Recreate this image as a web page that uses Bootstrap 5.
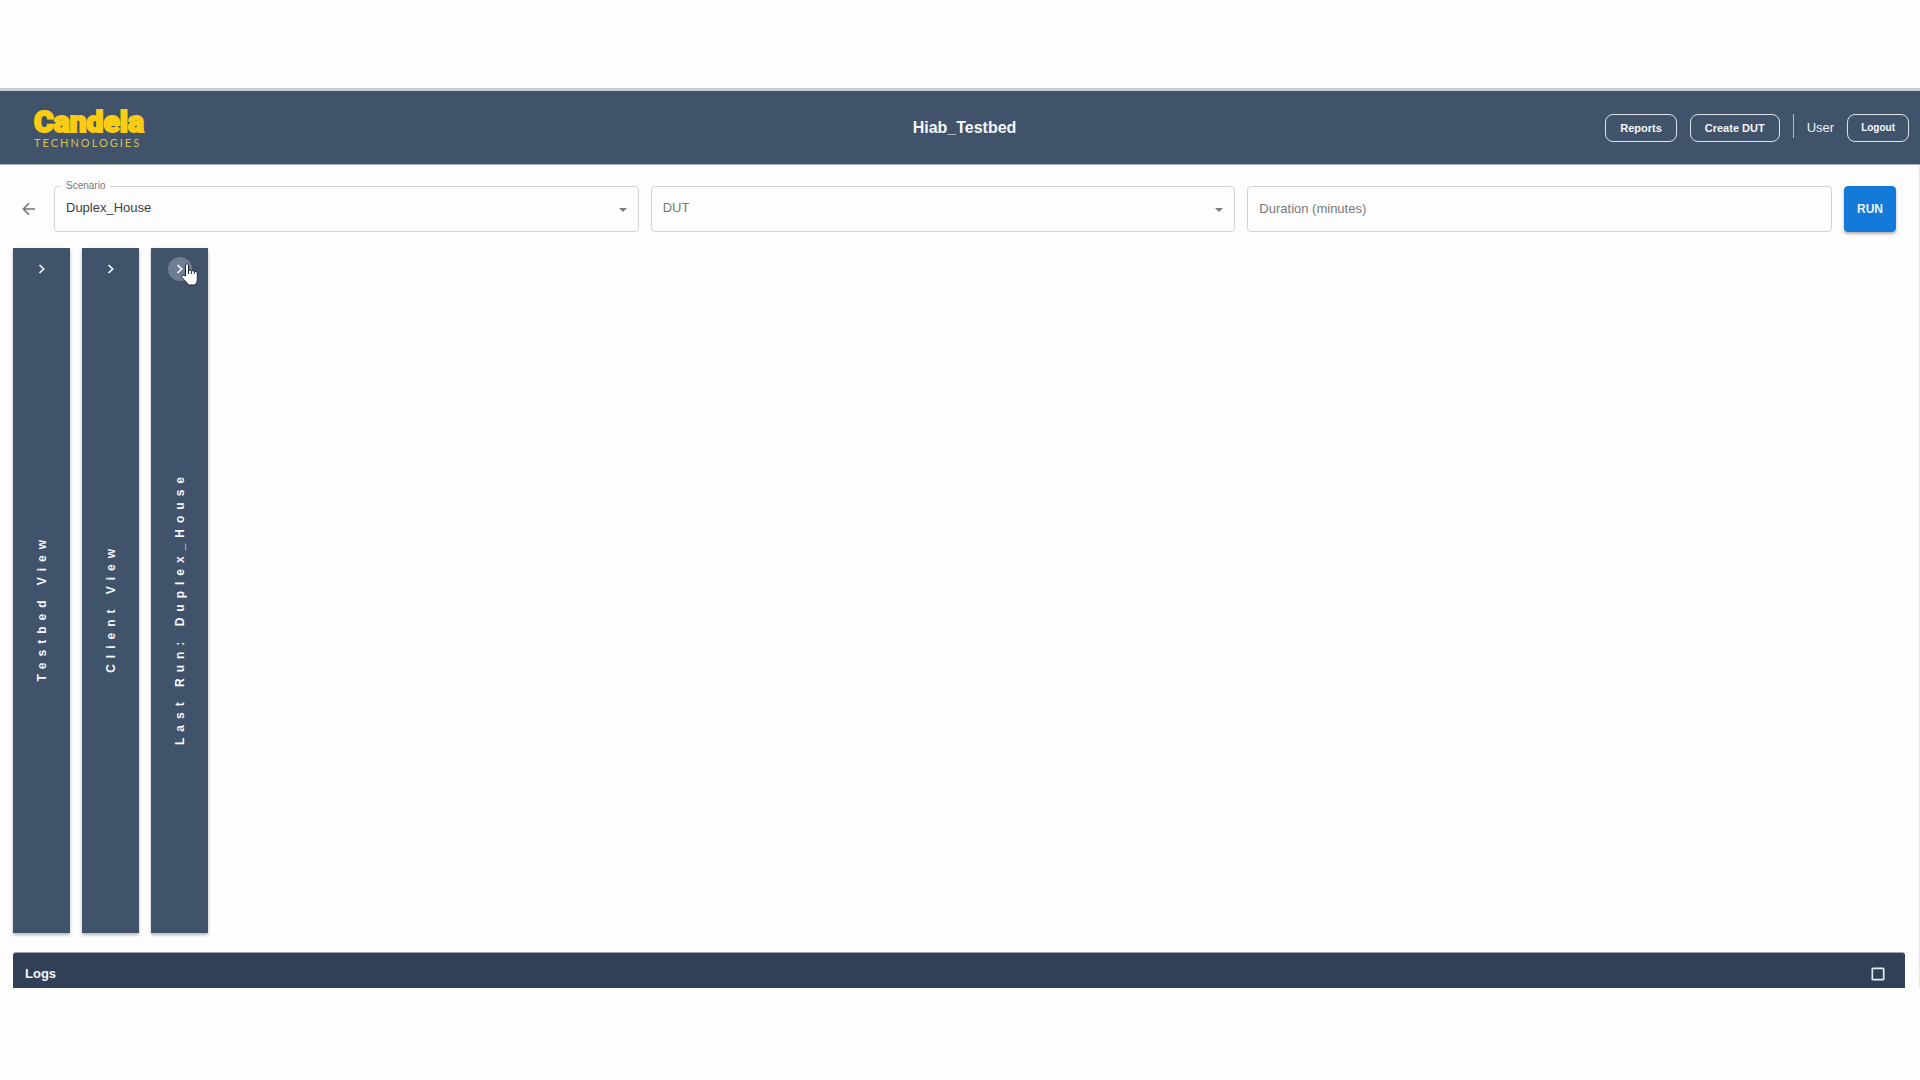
<!DOCTYPE html>
<html lang="en">
<head>
<meta charset="utf-8">
<meta name="viewport" content="width=device-width, initial-scale=1">
<title>Hiab_Testbed</title>
<link href="https://cdn.jsdelivr.net/npm/bootstrap@5.3.0/dist/css/bootstrap.min.css" rel="stylesheet">
<style>
  body { font-family: "Liberation Sans", Arial, sans-serif; font-size: 13px; background: #fefefe; color: #3c3f44; }
  .shell { padding: 88px 0 92px; }
  .app-frame { background: #fdfdfd; border-right: 1px solid #e6e8ea; }
  .topbar { height: 77px; background: #41526b; border-top: 3px solid #c5cdd3; border-bottom: 1px solid #a9b1bb; color: #f4f8fa; padding: 0 11px 0 20px; }
  .side { flex: 1 1 0; }
  .logo { color: #fccb12; margin-left: 14px; }
  .logo-name { font-family: Roboto, "Liberation Sans", sans-serif; font-size: 30px; line-height: 30px; font-weight: 900; -webkit-text-stroke: 2px #fccb12; }
  .logo-sub { font-family: Lato, sans-serif; font-size: 11px; line-height: 12px; letter-spacing: 2px; color: #d9c34e; }
  .app-title { font-size: 16px; line-height: 20px; font-weight: 700; }
  .account { gap: 13px; }
  .btn-top { --bs-btn-color: #f4f8fa; --bs-btn-border-color: #dbe3e8; --bs-btn-hover-color: #fff; --bs-btn-hover-bg: #53647d; --bs-btn-hover-border-color: #fff;
    height: 28px; padding: 0 14px; border-radius: 8px; font-size: 11px; line-height: 26px; font-weight: 700; }
  .btn-logout { padding: 0 13px; font-size: 10px; }
  .rule { width: 1px; height: 24px; background: #b4bcc6; margin-bottom: 4px; }
  .user { color: #eef3f6; }
  .runbar { padding: 21px 23px 16px 22px; }
  .back { width: 14px; height: 14px; margin-right: 18px; color: #6f7275; }
  .fields { gap: 12px; }
  .field { position: relative; flex: 1 1 0; min-width: 0; }
  .field .form-control, .field .form-select { height: 46px; padding: 0 12px 2px 11px; border: 1px solid #d0d2d4; border-radius: 4px; font-size: 13px; background-color: #fdfdfd; color: #3c3f44; }
  .field .form-select { padding-right: 30px; background-size: 8px 4px; background-position: right 11px top 21px;
    background-image: url("data:image/svg+xml,%3Csvg xmlns='http://www.w3.org/2000/svg' viewBox='0 0 8 4'%3E%3Cpath d='M0 0h8L4 4z' fill='%23797b7e'/%3E%3C/svg%3E"); }
  .field .form-control::placeholder, .field .unset { color: #77797b; opacity: 1; }
  .float-label { position: absolute; top: -6px; left: 7px; padding: 0 5px; font-size: 10px; line-height: 12px; background: #fdfdfd; color: #77797b; }
  .btn-run { --bs-btn-color: #eaf5fb; --bs-btn-bg: #147ad9; --bs-btn-border-color: #147ad9; --bs-btn-hover-color: #fff; --bs-btn-hover-bg: #1068bc;
    width: 52px; height: 46px; padding: 0; border-radius: 4px; font-size: 12px; font-weight: 700; box-shadow: 0 2px 3px rgba(0,0,0,.3); }
  .board { padding: 0 13px; gap: 12px; }
  .strip { width: 57px; background: #41526b; color: #f4f8fa; box-shadow: 0 2px 3px rgba(0,0,0,.28); padding: 9px 0 4px; }
  .toggle { width: 24px; height: 24px; padding: 0; border: 0; border-radius: 50%; color: #f4f8fa; background: transparent; position: relative; }
  .toggle.hovered { background: #6f7d92; }
  .hand { position: absolute; left: 13px; top: 6px; z-index: 2; }
  .strip-name { writing-mode: vertical-rl; transform: rotate(180deg); font-size: 12px; line-height: 16px; font-weight: 700; letter-spacing: 6px; margin: 0; padding-bottom: 6px; white-space: nowrap; }
  .logs { height: 36px; margin: 19px 14px 0 13px; padding: 6px 20px 0 12px; background: #314057; color: #f4f8fa; border-radius: 3px 3px 0 0; border-top: 1px solid #9aa6b2; }
  .logs h2 { font-size: 13px; line-height: 16px; font-weight: 700; margin: 0; }
  .expand { padding: 0; border: 0; background: transparent; color: #e1ecf1; }
  svg { display: block; }
</style>
<script src="https://cdn.jsdelivr.net/npm/bootstrap@5.3.0/dist/js/bootstrap.bundle.min.js"></script>
</head>
<body>
<div class="shell min-vh-100 d-flex flex-column">
  <header class="topbar d-flex align-items-center">
    <div class="side">
      <a href="#" class="logo d-inline-flex flex-column text-decoration-none" aria-label="Candela Technologies">
        <span class="logo-name">Candela</span>
        <span class="logo-sub">TECHNOLOGIES</span>
      </a>
    </div>
    <h1 class="app-title mb-0">Hiab_Testbed</h1>
    <nav class="side account d-flex justify-content-end align-items-center" aria-label="Account">
      <button type="button" class="btn btn-top">Reports</button>
      <button type="button" class="btn btn-top">Create DUT</button>
      <span class="rule"></span>
      <span class="user">User</span>
      <button type="button" class="btn btn-top btn-logout">Logout</button>
    </nav>
  </header>

  <main class="app-frame flex-grow-1 d-flex flex-column">
    <form class="runbar d-flex align-items-center">
      <a href="#" class="back" aria-label="Back">
        <svg width="14" height="14" viewBox="0 0 14 14" fill="none" stroke="currentColor" stroke-width="1.5"><path d="M13 7H1.5M7 1.2 1.3 7 7 12.8"/></svg>
      </a>
      <div class="fields d-flex flex-grow-1">
        <div class="field">
          <select id="scenario" class="form-select"><option>Duplex_House</option></select>
          <label for="scenario" class="float-label">Scenario</label>
        </div>
        <div class="field">
          <select id="dut" class="form-select unset" aria-label="DUT"><option>DUT</option></select>
        </div>
        <div class="field">
          <input id="duration" type="text" class="form-control" placeholder="Duration (minutes)" aria-label="Duration (minutes)">
        </div>
        <button type="button" class="btn btn-run">RUN</button>
      </div>
    </form>

    <div class="board flex-grow-1 d-flex">
      <section class="strip d-flex flex-column align-items-center">
        <button type="button" class="toggle d-flex align-items-center justify-content-center" aria-label="Expand Testbed View">
          <svg width="8" height="10" viewBox="0 0 8 10" fill="none" stroke="currentColor" stroke-width="1.7"><path d="M1.5 1 5.7 5 1.5 9"/></svg>
        </button>
        <div class="flex-grow-1 d-flex align-items-center"><h2 class="strip-name">Testbed View</h2></div>
      </section>
      <section class="strip d-flex flex-column align-items-center">
        <button type="button" class="toggle d-flex align-items-center justify-content-center" aria-label="Expand Client View">
          <svg width="8" height="10" viewBox="0 0 8 10" fill="none" stroke="currentColor" stroke-width="1.7"><path d="M1.5 1 5.7 5 1.5 9"/></svg>
        </button>
        <div class="flex-grow-1 d-flex align-items-center"><h2 class="strip-name">Client View</h2></div>
      </section>
      <section class="strip d-flex flex-column align-items-center">
        <button type="button" class="toggle hovered d-flex align-items-center justify-content-center" aria-label="Expand Last Run">
          <svg width="8" height="10" viewBox="0 0 8 10" fill="none" stroke="currentColor" stroke-width="1.7"><path d="M1.5 1 5.7 5 1.5 9"/></svg>
          <svg class="hand" width="18" height="24" viewBox="0 0 18 24" fill="#fff" stroke="#1d2430" stroke-width="1" stroke-linejoin="round"><path d="M4.500 13V2.500c0-2.200 3-2.200 3 0V8c.4-1.200 2.700-1.100 2.900.3.500-1.100 2.700-.8 2.900.5.700-.9 3-.5 3 1.200v6.500c0 2.500-1 3.500-2 5.500H7.500C6 19.500 3.500 17.500 1 14.500c-.9-1.200.3-2.500 1.500-2.200.8.200 1.500.7 2 .7z"/><path d="M7.500 8v3M10.400 8.500v2.500M13.300 9v2" fill="none"/></svg>
        </button>
        <div class="flex-grow-1 d-flex align-items-center"><h2 class="strip-name">Last Run: Duplex_House</h2></div>
      </section>
    </div>

    <section class="logs d-flex align-items-center justify-content-between">
      <h2>Logs</h2>
      <button type="button" class="expand" aria-label="Expand logs">
        <svg width="14" height="14" viewBox="0 0 14 14" fill="none" stroke="currentColor" stroke-width="1.7"><rect x="1.300" y="1.300" width="11.400" height="11.400" rx=".8"/></svg>
      </button>
    </section>
  </main>
</div>
</body>
</html>
